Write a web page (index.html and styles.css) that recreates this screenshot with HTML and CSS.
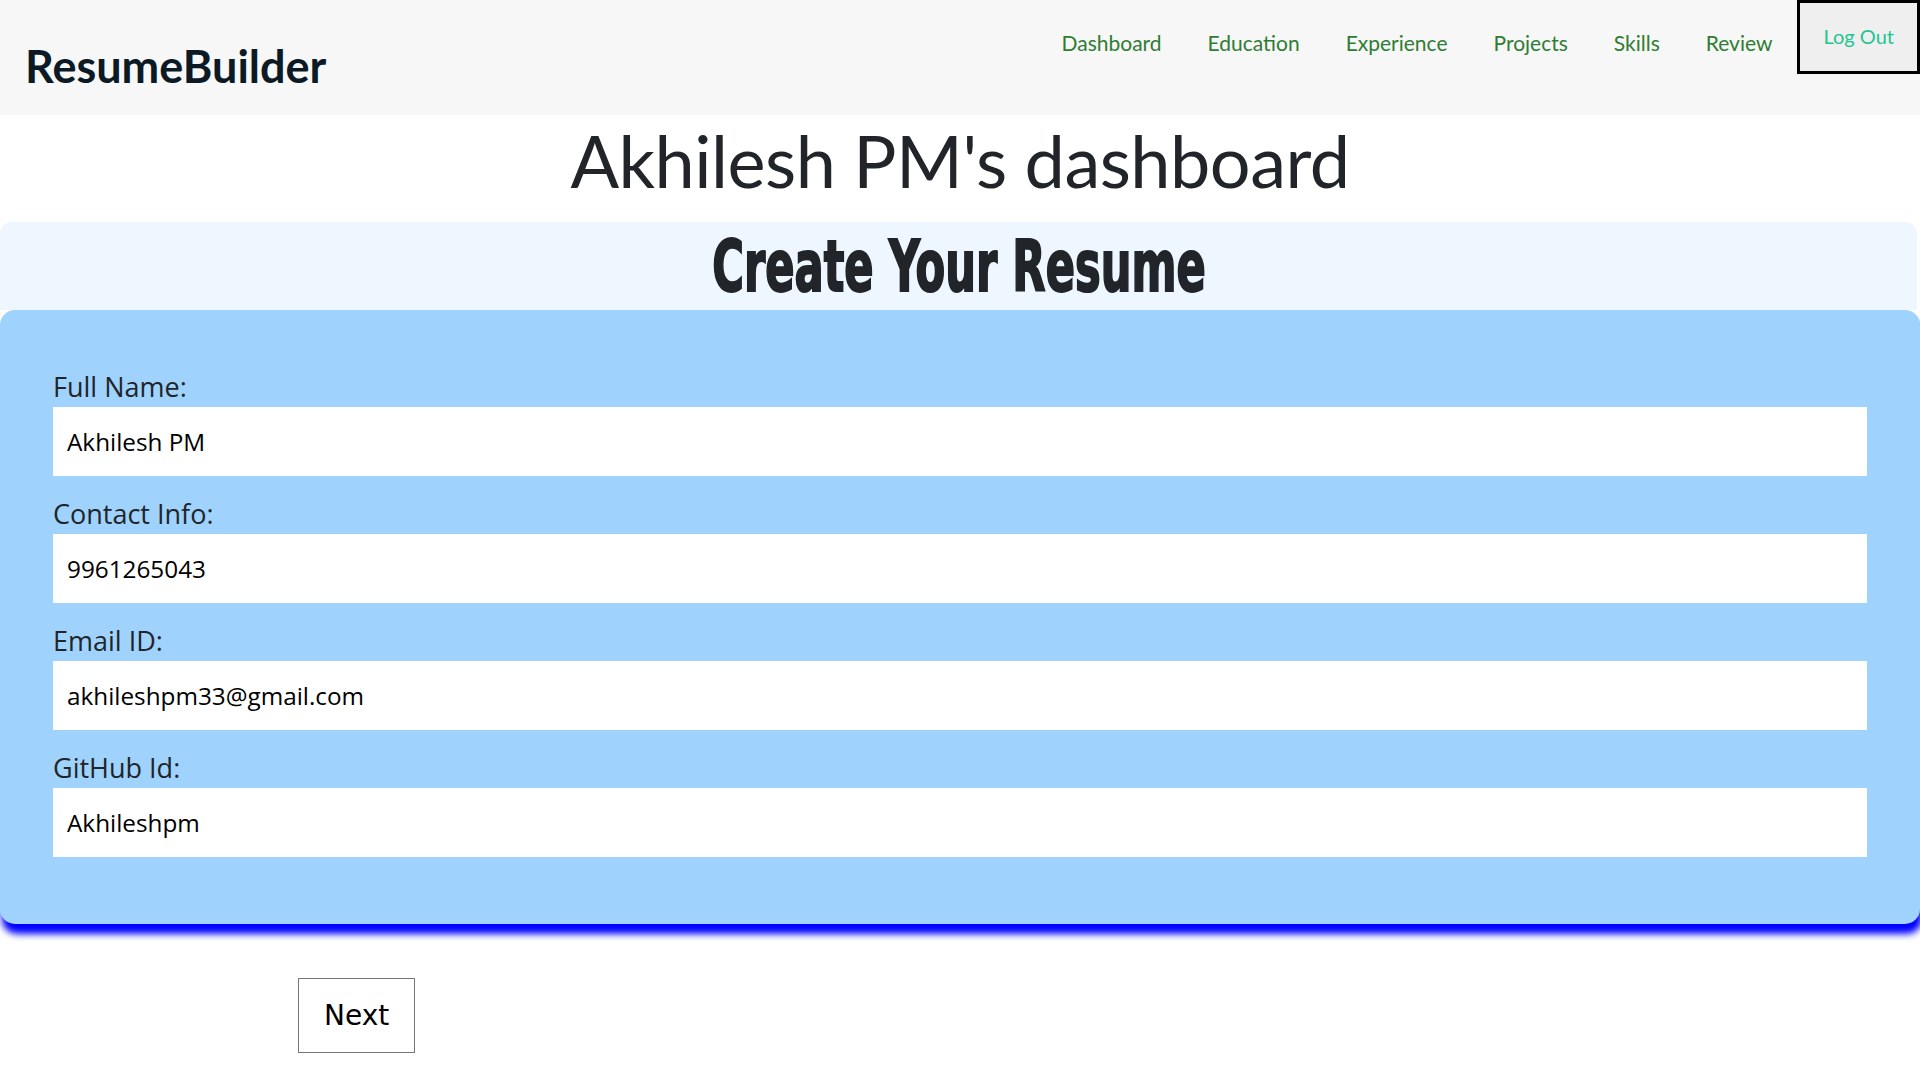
FILE: index.html
```html
<!DOCTYPE html>
<html lang="en">
<head>
<meta charset="utf-8">
<title>ResumeBuilder</title>
<link rel="stylesheet" href="styles.css">
</head>
<body>
<header class="topbar">
  <div class="brand">ResumeBuilder</div>
  <nav class="nav">
    <a class="nav-link" href="#">Dashboard</a>
    <a class="nav-link" href="#">Education</a>
    <a class="nav-link" href="#">Experience</a>
    <a class="nav-link" href="#">Projects</a>
    <a class="nav-link" href="#">Skills</a>
    <a class="nav-link" href="#">Review</a>
    <button class="logout" type="button">Log Out</button>
  </nav>
</header>
<h1 class="page-title">Akhilesh PM's dashboard</h1>
<div class="band"><h2 class="band-title"><span class="impact">Create Your Resume</span></h2></div>
<form class="card">
  <label class="field-label" for="fullname">Full Name:</label>
  <input class="field-input" id="fullname" type="text" value="Akhilesh PM">
  <label class="field-label" for="contact">Contact Info:</label>
  <input class="field-input" id="contact" type="text" value="9961265043">
  <label class="field-label" for="email">Email ID:</label>
  <input class="field-input" id="email" type="text" value="akhileshpm33@gmail.com">
  <label class="field-label" for="github">GitHub Id:</label>
  <input class="field-input last" id="github" type="text" value="Akhileshpm">
</form>
<div class="actions">
  <button class="next-btn" type="button">Next</button>
</div>
</body>
</html>
```
FILE: styles.css
```css
html, body {
  margin: 0;
  padding: 0;
  background: #ffffff;
}
body {
  font-family: "Lato", "Liberation Sans", sans-serif;
  color: #212529;
  overflow: hidden;
}
.topbar {
  height: 115px;
  background: #f7f7f7;
  display: flex;
  justify-content: space-between;
  align-items: flex-start;
}
.brand {
  margin: 40px 0 0 25px;
  font-family: "Lato", sans-serif;
  font-weight: 700;
  font-size: 45px;
  line-height: 53px;
  color: #0b1a24;
}
.nav {
  display: flex;
  align-items: flex-start;
}
.nav-link {
  font-family: "Lato", sans-serif;
  font-size: 21px;
  line-height: 24px;
  padding: 31px 23px 0 23px;
  color: #2e7d32;
  text-decoration: none;
}
.logout {
  margin-left: 2px;
  font-family: "Lato", sans-serif;
  font-size: 20px;
  line-height: 24px;
  padding: 21px 23px 23px 23px;
  height: 74px;
  box-sizing: border-box;
  border: 3px solid #000;
  background: #efefef;
  color: #1fc592;
}
.page-title {
  margin: 2px 0 0 0;
  text-align: center;
  font-family: "Lato", sans-serif;
  font-weight: 400;
  font-size: 72px;
  line-height: 86px;
  letter-spacing: -0.5px;
  color: #212529;
}
.band {
  margin: 19px 3px 0 0;
  height: 88px;
  background: #eef6ff;
  border-radius: 12px 12px 0 0;
  text-align: center;
}
.band-title {
  margin: 0;
  font-family: "Liberation Sans Narrow", "DejaVu Sans Condensed", "Liberation Sans", sans-serif;
  font-weight: 700;
  font-size: 72px;
  line-height: 88px;
  color: #212529;
}
.impact {
  display: inline-block;
  transform: scaleX(0.667);
  -webkit-text-stroke: 2px #212529;
}
.card {
  margin: 0;
  padding: 59px 53px 47px 53px;
  background: #9fd3fd;
  border-radius: 15px;
  box-shadow: 2px 10px 7px #0000ff;
  display: flex;
  flex-direction: column;
}
.field-label {
  font-family: "Open Sans", sans-serif;
  font-size: 27px;
  line-height: 36px;
  color: #212529;
  margin-bottom: 2px;
}
.field-input {
  height: 69px;
  box-sizing: border-box;
  border: none;
  outline: none;
  background: #ffffff;
  padding: 0 14px;
  font-family: "Open Sans", sans-serif;
  font-size: 24.3px;
  color: #000;
  margin-bottom: 20px;
}
.actions {
  padding: 54px 0 0 298px;
}
.next-btn {
  font-family: "DejaVu Sans", sans-serif;
  font-size: 28px;
  line-height: 33px;
  padding: 20px 25px;
  background: #fff;
  border: 1px solid #767676;
  color: #000;
}
```
